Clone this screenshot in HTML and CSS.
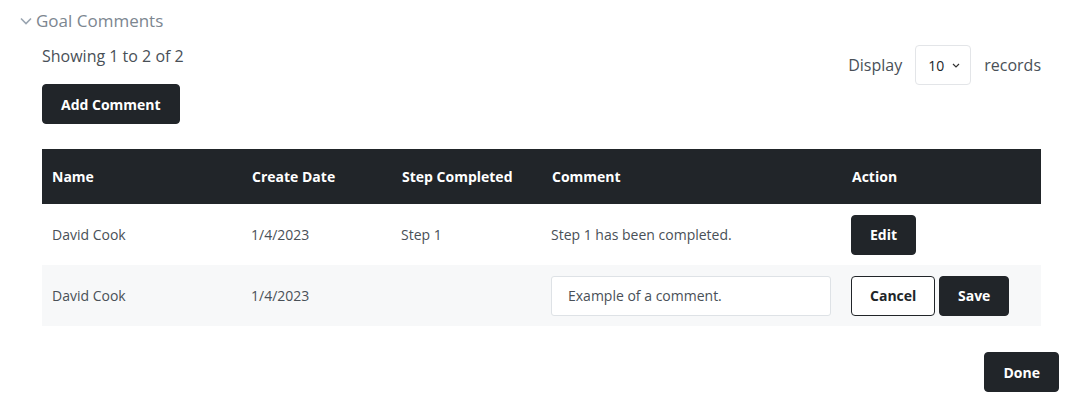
FILE: index.html
```html
<!DOCTYPE html>
<html lang="en">
<head>
    <meta charset="UTF-8">
    <meta name="viewport" content="width=device-width, initial-scale=1.0">
    <title>Goal Comments</title>
    <link rel="stylesheet" href="styles.css">
</head>
<body>
    <section class="panel">
        <h2 class="panel-title">
            <svg class="chevron" width="12" height="8" viewBox="0 0 12 8"><path d="M1 1.5 6 6.5 11 1.5" fill="none" stroke="#9aa5b1" stroke-width="1.6"/></svg>
            Goal Comments
        </h2>

        <div class="panel-body">
            <div class="toolbar">
                <div class="toolbar-left">
                    <p class="count">Showing 1 to 2 of 2</p>
                    <button class="btn btn-dark">Add Comment</button>
                </div>
                <div class="display">
                    <span>Display</span>
                    <div class="select">
                        10
                        <svg width="8" height="5" viewBox="0 0 8 5"><path d="M1 1 4 4 7 1" fill="none" stroke="#333" stroke-width="1.2"/></svg>
                    </div>
                    <span>records</span>
                </div>
            </div>

            <table class="comments">
                <thead>
                    <tr>
                        <th class="col-name">Name</th>
                        <th class="col-date">Create Date</th>
                        <th class="col-step">Step Completed</th>
                        <th class="col-comment">Comment</th>
                        <th>Action</th>
                    </tr>
                </thead>
                <tbody>
                    <tr>
                        <td>David Cook</td>
                        <td>1/4/2023</td>
                        <td>Step 1</td>
                        <td>Step 1 has been completed.</td>
                        <td><button class="btn btn-dark">Edit</button></td>
                    </tr>
                    <tr class="striped">
                        <td>David Cook</td>
                        <td>1/4/2023</td>
                        <td></td>
                        <td><input class="comment-input" type="text" value="Example of a comment."></td>
                        <td>
                            <button class="btn btn-outline">Cancel</button>
                            <button class="btn btn-dark">Save</button>
                        </td>
                    </tr>
                </tbody>
            </table>

            <div class="footer-actions">
                <button class="btn btn-dark">Done</button>
            </div>
        </div>
    </section>
</body>
</html>
```

FILE: styles.css
```css
body {
    margin: 0;
    font-family: "Open Sans", "Liberation Sans", sans-serif;
    color: #495057;
    background: #fff;
}
.panel {
    padding: 8px 11px 0 20px;
}
.panel-title {
    margin: 0;
    display: flex;
    align-items: center;
    gap: 4px;
    font-size: 17px;
    font-weight: 400;
    color: #7c8690;
    height: 24px;
}
.chevron {
    margin-top: 2px;
}
.panel-body {
    padding: 0 0 0 22px;
}
.toolbar {
    display: flex;
    justify-content: space-between;
    align-items: flex-start;
    margin-top: 13px;
    padding-right: 18px;
}
.count {
    margin: 0 0 17px;
    font-size: 16px;
    line-height: 22px;
    color: #495057;
}
.btn {
    font-family: inherit;
    font-size: 14px;
    font-weight: 700;
    height: 40px;
    padding: 0 18px;
    border-radius: 4px;
    cursor: pointer;
}
.btn-dark {
    background: #212529;
    color: #fff;
    border: 1px solid #212529;
}
.btn-outline {
    background: #fff;
    color: #212529;
    border: 1px solid #212529;
}
.display {
    display: flex;
    align-items: center;
    gap: 13px;
    font-size: 16px;
}
.select {
    width: 56px;
    height: 40px;
    box-sizing: border-box;
    border: 1px solid #e3e5e8;
    border-radius: 4px;
    display: flex;
    align-items: center;
    justify-content: space-between;
    padding: 0 10px 0 12px;
    font-size: 14px;
    color: #212529;
}
.comments {
    width: 999px;
    border-collapse: collapse;
    margin-top: 25px;
    font-size: 14px;
}
.comments th {
    background: #212529;
    color: #fff;
    text-align: left;
    font-weight: 700;
    height: 55px;
    padding: 0 10px;
}
.col-name { width: 180px; }
.col-date { width: 130px; }
.col-step { width: 130px; }
.col-comment { width: 280px; }
.comments td {
    height: 61px;
    padding: 0 10px 0 9px;
    color: #495057;
}
.comments td:first-child {
    padding-left: 10px;
}
.comments tr.striped td {
    background: #f7f8f9;
}
.comment-input {
    width: 280px;
    height: 40px;
    box-sizing: border-box;
    border: 1px solid #dee2e6;
    border-radius: 3px;
    padding: 0 16px;
    font-family: inherit;
    font-size: 14px;
    color: #495057;
    background: #fff;
}
.footer-actions {
    display: flex;
    justify-content: flex-end;
    margin-top: 26px;
}
```
